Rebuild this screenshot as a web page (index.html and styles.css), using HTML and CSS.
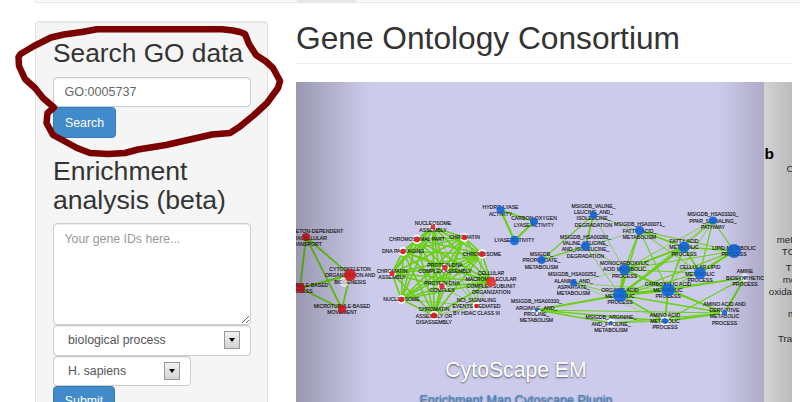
FILE: index.html
```html
<!DOCTYPE html>
<html lang="en">
<head>
<meta charset="utf-8">
<title>Gene Ontology Consortium</title>
<link rel="stylesheet" href="styles.css">
</head>
<body>
<nav class="navbar"><span class="nav-active"></span></nav>
<div class="columns">
  <aside class="well">
    <h2>Search GO data</h2>
    <form class="stack">
      <input class="control" type="text" value="GO:0005737">
      <button class="btn" type="button">Search</button>
    </form>
    <h2 class="second">Enrichment analysis (beta)</h2>
    <form class="stack">
      <textarea class="control area" placeholder="Your gene IDs here..."></textarea>
      <div class="control select">biological process<span class="arrow"></span></div>
      <div class="control select short">H. sapiens<span class="arrow"></span></div>
      <button class="btn submit" type="button">Submit</button>
    </form>
  </aside>
  <main>
    <h1>Gene Ontology Consortium</h1>
    <div class="carousel">
      <svg class="network" viewBox="296 82 496 320" width="496" height="320">
        <rect x="296" y="82" width="468" height="320" fill="#cdcbeb"/>
        <g id="edges"></g>
        <g id="halos"></g>
        <g id="labels"></g>
        <g id="nodes"></g>
        <rect x="764" y="82" width="28" height="320" fill="#fafafa"/>
        <g class="figure">
          <text class="panel" x="764.5" y="159">b</text>
          <text x="786.5" y="171.5">C</text>
          <text x="776.8" y="243">met</text>
          <text x="781.8" y="254.5">TC</text>
          <text x="785.8" y="271">T</text>
          <text x="782.8" y="283">me</text>
          <text x="768.8" y="294.5">oxidat</text>
          <text x="788" y="317">m</text>
          <text x="778" y="341.5">Tra</text>
        </g>
      </svg>
      <div class="fade left"></div>
      <div class="fade right"></div>
      <div class="caption">
        <h4>CytoScape EM</h4>
        <a>Enrichment Map Cytoscape Plugin</a>
      </div>
    </div>
  </main>
</div>
<svg class="marker" viewBox="0 0 800 402" width="800" height="402">
  <path d="M245 34 L240 32 L233 30.5 L222 29.3 L97 29.3 L82 32 L64 34.5 L51 37.5 L34 46 L20.5 54 L18.5 57 L19 66 L25 79 L35 88 L43 98 L54 107.5 L47.5 113 L46.5 123 L53 135 L66 142 L77 148 L90 153 L108 154 L125 153 L138 149.5 L166 145 L190 139.5 L212 134.5 L230 133 L240 126.5 L254 115 L267 103 L278 88 L280 81 L273 68 L266 61.5 L256 55 L249 44 Z"/>
</svg>
<script src="network.js"></script>
</body>
</html>
```
FILE: styles.css
```css
* { box-sizing: border-box; }
html, body { height: 402px; overflow: hidden; }
body { margin: 0; background: #fff; color: #333; font-family: "Liberation Sans", Arial, sans-serif; font-size: 12.3px; position: relative; }
.navbar { height: 3px; margin-left: 35px; background: #f8f8f8; border-bottom: 1px solid #e7e7e7; border-left: 1px solid #e7e7e7; padding-left: 261px; }
.nav-active { display: block; width: 59px; height: 2px; background: #e7e7e7; }
.columns { display: flex; height: 399px; overflow: hidden; padding: 18px 8px 0 35px; gap: 28px; align-items: stretch; }
.well { width: 233px; flex: none; background: #f5f5f5; border: 1px solid #e3e3e3; border-bottom: 0; border-radius: 4px 4px 0 0; padding: 17px 17px 0; box-shadow: inset 0 1px 1px rgba(0,0,0,.05); }
h1, h2, h4 { font-weight: 400; margin: 0; }
h2 { font-size: 26.3px; line-height: 29px; margin-bottom: 9px; white-space: nowrap; }
h2.second { margin: 19px 0 8px; white-space: normal; font-size: 26.6px; }
.stack { display: flex; flex-direction: column; align-items: flex-start; }
.control { font: inherit; color: #555; width: 198px; height: 30px; padding: 0 10.5px; background: #fff; border: 1px solid #ccc; border-radius: 4px; box-shadow: inset 0 1px 1px rgba(0,0,0,.075); outline: 0; }
input.control { color: #666; font-size: 12.6px; }
.area { height: 102px; padding-top: 8px; display: block; }
.area::placeholder { color: #999; }
.select { display: flex; align-items: center; justify-content: space-between; padding: 0 10px 0 14px; height: 30.5px; }
.short { width: 138px; }
.arrow { width: 16px; height: 18px; border: 1px solid #999; background: linear-gradient(#f3f3f3, #d3d3d3); display: flex; align-items: center; justify-content: center; }
.arrow::after { content: ""; border: 3.5px solid transparent; border-top: 4px solid #000; border-bottom: 0; }
.btn { font: inherit; color: #fff; height: 31px; padding: 0; width: 63px; background: #428bca; border: 1px solid #357ebd; border-radius: 4px; }
.submit { width: 62px; height: 30px; margin-bottom: -20px; }
main { width: 496px; flex: none; }
h1 { font-size: 31.7px; line-height: 35px; height: 43px; border-bottom: 1px solid #eee; white-space: nowrap; }
.carousel { position: relative; margin-top: 18px; height: 320px; overflow: hidden; }
.network { display: block; }
.edge { stroke: #69d012; fill: none; }
.label { font: 5.15px "Liberation Sans", Arial, sans-serif; fill: #111; stroke: #111; stroke-width: .12px; text-anchor: middle; }
.node { fill-opacity: .88; }
.figure { font-size: 9.7px; fill: #333; }
.figure .panel { font-size: 15.5px; font-weight: 700; fill: #000; }
.fade { position: absolute; top: 0; bottom: 0; width: 74px; }
.left { left: 0; background: linear-gradient(to right, rgba(0,0,0,.25), rgba(0,0,0,0)); }
.right { right: 0; background: linear-gradient(to left, rgba(0,0,0,.25), rgba(0,0,0,0)); }
.caption { position: absolute; left: 98px; right: 154px; top: 276px; text-align: center; color: #fff; text-shadow: 0 1px 2px rgba(0,0,0,.6); white-space: nowrap; }
.caption h4 { font-size: 21.2px; line-height: 24px; }
.caption a { display: block; color: #428bca; margin-top: 10px; font-size: 12.6px; line-height: 16px; }
.marker { position: absolute; left: 0; top: 0; pointer-events: none; }
.marker path { fill: none; stroke: #7b0000; stroke-width: 6.5; stroke-linejoin: round; }
```
FILE: network.js
```js
// id: [x, y, radius, colour, halo, first label line centre, label lines]
const R = "#e3141c", B = "#0f62dc";
const nodes = {
  transport: [306, 237, 4, R, 0, 231.5, "CYTOSKELETON-DEPENDENT|INTRACELLULAR|TRANSPORT"],
  hub: [344, 282, 3, "#e4dde8", 1, 0, ""],
  cyto: [350, 275, 6, R, 0, 269, "CYTOSKELETON|ORGANIZATION AND|BIOGENESIS"],
  mproc: [300, 288, 5, R, 0, 285, "MICROTUBULE-BASED|PROCESS"],
  mmove: [342, 309, 4, R, 0, 306, "MICROTUBULE-BASED|MOVEMENT"],
  nasm: [433, 227, 2.5, R, 1, 223.5, "NUCLEOSOME|ASSEMBLY"],
  cpart: [417, 239.5, 3, R, 1, 239.5, "CHROMOSOMAL PART"],
  chromatin: [464.5, 237.5, 2.7, R, 1, 237.5, "CHROMATIN"],
  dna: [403, 251.5, 2.7, R, 1, 251.5, "DNA PACKAGING"],
  chrom: [482, 254, 3, R, 1, 254, "CHROMOSOME"],
  casm: [392, 273.5, 2.6, R, 1, 271, "CHROMATIN|ASSEMBLY"],
  pasm: [445, 268, 2.7, R, 1, 265, "PROTEIN-DNA|COMPLEX ASSEMBLY"],
  pdna: [442, 286.5, 2.7, R, 1, 283.5, "PROTEIN-DNA|COMPLEX"],
  macro: [491, 282, 5, "#ee3030", 0, 273, "CELLULAR|MACROMOLECULAR|COMPLEX SUBUNIT|ORGANIZATION"],
  nucleo: [401.5, 299.5, 2.7, R, 1, 299.5, "NUCLEOSOME"],
  nci: [476.5, 306, 2.3, R, 1, 300, "NCI_SIGNALING|EVENTS MEDIATED|BY HDAC CLASS III"],
  cdis: [434, 315.5, 3, R, 1, 309.3, "CHROMATIN|ASSEMBLY OR|DISASSEMBLY"],
  hydro: [500.5, 210, 4, B, 0, 207.5, "HYDRO-LYASE|ACTIVITY"],
  lyase: [514.5, 240.5, 4.8, B, 0, 240.5, "LYASE ACTIVITY"],
  carbon: [534, 221.5, 4, B, 0, 218.5, "CARBON-OXYGEN|LYASE ACTIVITY"],
  val: [593.5, 215, 3.8, B, 0, 205.7, "MSIGDB_VALINE_|LEUCINE_AND_|ISOLEUCINE_|DEGRADATION"],
  val2: [585.5, 246, 4.5, B, 0, 236.8, "MSIGDB_HSA00280_|VALINE_LEUCINE_|AND_ISOLEUCINE_|DEGRADATION"],
  prop: [541.5, 260, 4, B, 0, 254, "MSIGDB_|PROPANOATE_|METABOLISM"],
  alan: [573.5, 283, 3.5, B, 0, 274.5, "MSIGDB_HSA00252_|ALANINE_AND_|ASPARTATE_|METABOLISM"],
  argi: [536.5, 310, 2, B, 1, 301.3, "MSIGDB_HSA00330_|ARGININE_AND_|PROLINE_|METABOLISM"],
  argi2: [611, 323, 2, B, 1, 317.3, "MSIGDB_ARGININE_|AND_PROLINE_|METABOLISM"],
  mono: [624.5, 269.5, 5.5, B, 0, 263, "MONOCARBOXYLIC|ACID METABOLIC|PROCESS"],
  organic: [620, 295, 7, B, 0, 289.8, "ORGANIC ACID|METABOLIC|PROCESS"],
  fat: [639.5, 230.5, 4.5, B, 0, 224.5, "MSIGDB_HSA00071_|FATTY_ACID_|METABOLISM"],
  fatty: [684, 247, 5.5, B, 0, 241, "FATTY ACID|METABOLIC|PROCESS"],
  carbox: [668, 290, 6.7, B, 0, 283.7, "CARBOXYLIC ACID|METABOLIC|PROCESS"],
  amino: [665, 321, 3, B, 1, 314.7, "AMINO ACID|METABOLIC|PROCESS"],
  lipid: [700, 273, 6, B, 0, 267.5, "CELLULAR LIPID|METABOLIC|PROCESS"],
  ppar: [713, 220.5, 4, B, 0, 214.5, "MSIGDB_HSA03320_|PPAR_SIGNALING_|PATHWAY"],
  lip: [734, 251, 7, B, 0, 248, "LIPID METABOLIC|PROCESS"],
  amine: [745, 277.5, 1.5, B, 1, 271.3, "AMINE|BIOSYNTHETIC|PROCESS"],
  deriv: [724.5, 313, 2.8, B, 1, 303.7, "AMINO ACID AND|DERIVATIVE|METABOLIC|PROCESS"]
};
// from, to, width
const edges = [
  "transport mproc 1.8", "transport cyto 1.8", "transport mmove 1.8", "mproc cyto 2", "mproc mmove 1.8", "cyto mmove 1.8",
  "hydro lyase 2.2", "hydro carbon 1.8", "lyase carbon 2.2",
  "val val2 2", "val prop 1.2", "val2 prop 1.2", "val fatty .7", "val mono .7", "val2 organic .8", "val2 mono .8", "prop fat .6",
  "alan organic .8", "alan mono .5", "alan carbox .6", "alan amino .5", "argi organic 1.8", "argi amino 1.4", "argi deriv 1.2", "argi argi2 1.6", "argi2 amino 1", "argi2 deriv 1",
  "mono organic 3", "mono fat 1.2", "mono fatty 2", "mono carbox 2", "mono lipid 1.2", "mono lip 1", "mono ppar .8", "mono deriv 1",
  "organic fat 1.5", "organic fatty 2.4", "organic carbox 3", "organic lipid 1.2", "organic lip 1.2", "organic amino 1.6", "organic deriv 1.5", "organic amine 1", "organic ppar 1",
  "fat fatty 1.4", "fat carbox 1.1", "fat lip 1", "fat lipid 1", "fatty carbox 1.8", "fatty lipid 1.8", "fatty lip 1.4", "fatty ppar 1",
  "carbox amino 2", "carbox deriv 1.4", "carbox amine 1.3", "carbox lip 1", "carbox ppar .7", "lipid lip 2", "lipid ppar 1.2", "ppar lip 1.2",
  "amino deriv 2.2", "amino amine 1.2", "deriv amine 2"
];
const cluster = ["nasm", "cpart", "chromatin", "dna", "chrom", "casm", "pasm", "pdna", "macro", "nucleo", "cdis"];
cluster.forEach((a, i) => cluster.slice(i + 1).forEach(b => edges.push(a + " " + b + " 1.7")));
["macro", "cdis", "pdna", "pasm", "chrom", "chromatin", "nasm", "nucleo"].forEach(a => edges.push(a + " nci .8"));

function draw(parent, tag, attrs, text) {
  const el = document.createElementNS("http://www.w3.org/2000/svg", tag);
  for (const key in attrs) el.setAttribute(key, attrs[key]);
  if (text) el.textContent = text;
  document.getElementById(parent).appendChild(el);
}
edges.forEach(e => {
  const [a, b, w] = e.split(" ");
  draw("edges", "line", { class: "edge", x1: nodes[a][0], y1: nodes[a][1], x2: nodes[b][0], y2: nodes[b][1], "stroke-width": w });
});
Object.values(nodes).forEach(([x, y, r, colour, halo, top, lines]) => {
  if (halo) draw("halos", "circle", { cx: x, cy: y, r: Math.max(r + 1.7, 4.2), fill: "#fff" });
  draw("nodes", "circle", { class: "node", cx: x, cy: y, r: r, fill: colour });
  lines.split("|").forEach((line, i) => {
    if (line) draw("labels", "text", { class: "label", x: x, y: top + i * 6.3 + 1.9 }, line);
  });
});
```
